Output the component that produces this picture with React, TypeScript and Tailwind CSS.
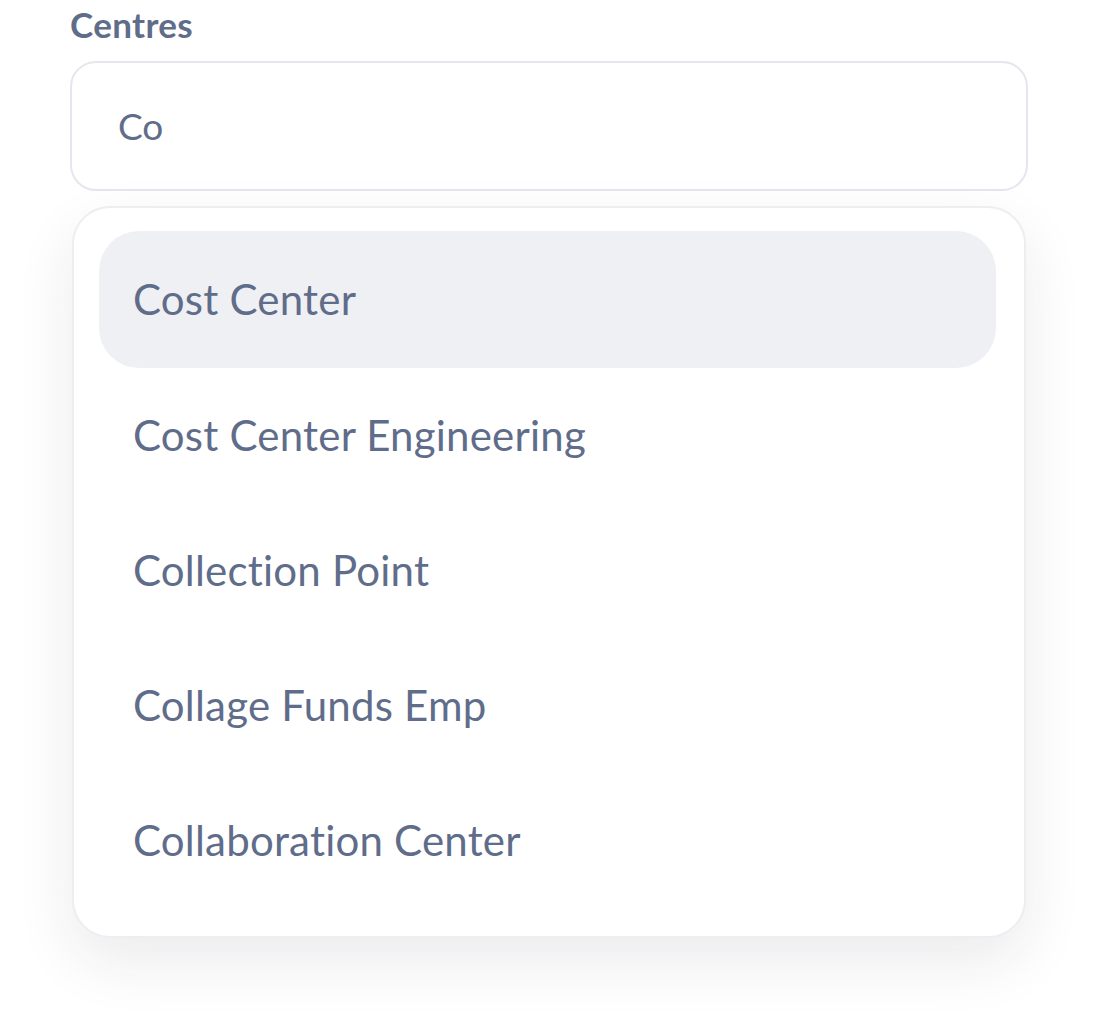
import React, { useState } from "react";

const options = [
  "Cost Center",
  "Cost Center Engineering",
  "Collection Point",
  "Collage Funds Emp",
  "Collaboration Center",
];

const CentreSelect: React.FC = () => {
  const [query, setQuery] = useState("Co");
  const [active, setActive] = useState(0);

  return (
    <div className="w-[958px] ml-[70px]">
      {/* Label */}
      <label className="block text-[35px] leading-[48px] font-bold tracking-[0.01em] text-[#5f6d8a]">
        Centres
      </label>

      {/* Input */}
      <div className="mt-[13px] h-[130px] rounded-[26px] border-2 border-[#e6e6ef] bg-white flex items-center px-[46px]">
        <input
          value={query}
          onChange={(e) => setQuery(e.target.value)}
          className="w-full bg-transparent outline-none text-[37px] text-[#5f6d8a]"
        />
      </div>

      {/* Dropdown */}
      <div className="mt-[15px] mx-[2px] rounded-[38px] border-2 border-[#ededf2] bg-white pt-[23px] pb-[28px] pl-[25px] pr-[28px] shadow-[0_24px_60px_rgba(30,35,60,0.09)]">
        {options.map((opt, i) => (
          <div
            key={opt}
            onMouseEnter={() => setActive(i)}
            className={`${i === 0 ? "h-[137px]" : "h-[135px]"} rounded-[40px] flex items-center px-[34px] text-[42px] tracking-[0.005em] text-[#5f6d8a] ${
              i === active ? "bg-[#eff0f3]" : ""
            }`}
          >
            {opt}
          </div>
        ))}
      </div>
    </div>
  );
};

export default function App() {
  return (
    <div className="min-h-[1020px] bg-white font-['Lato',sans-serif]">
      <CentreSelect />
    </div>
  );
}
